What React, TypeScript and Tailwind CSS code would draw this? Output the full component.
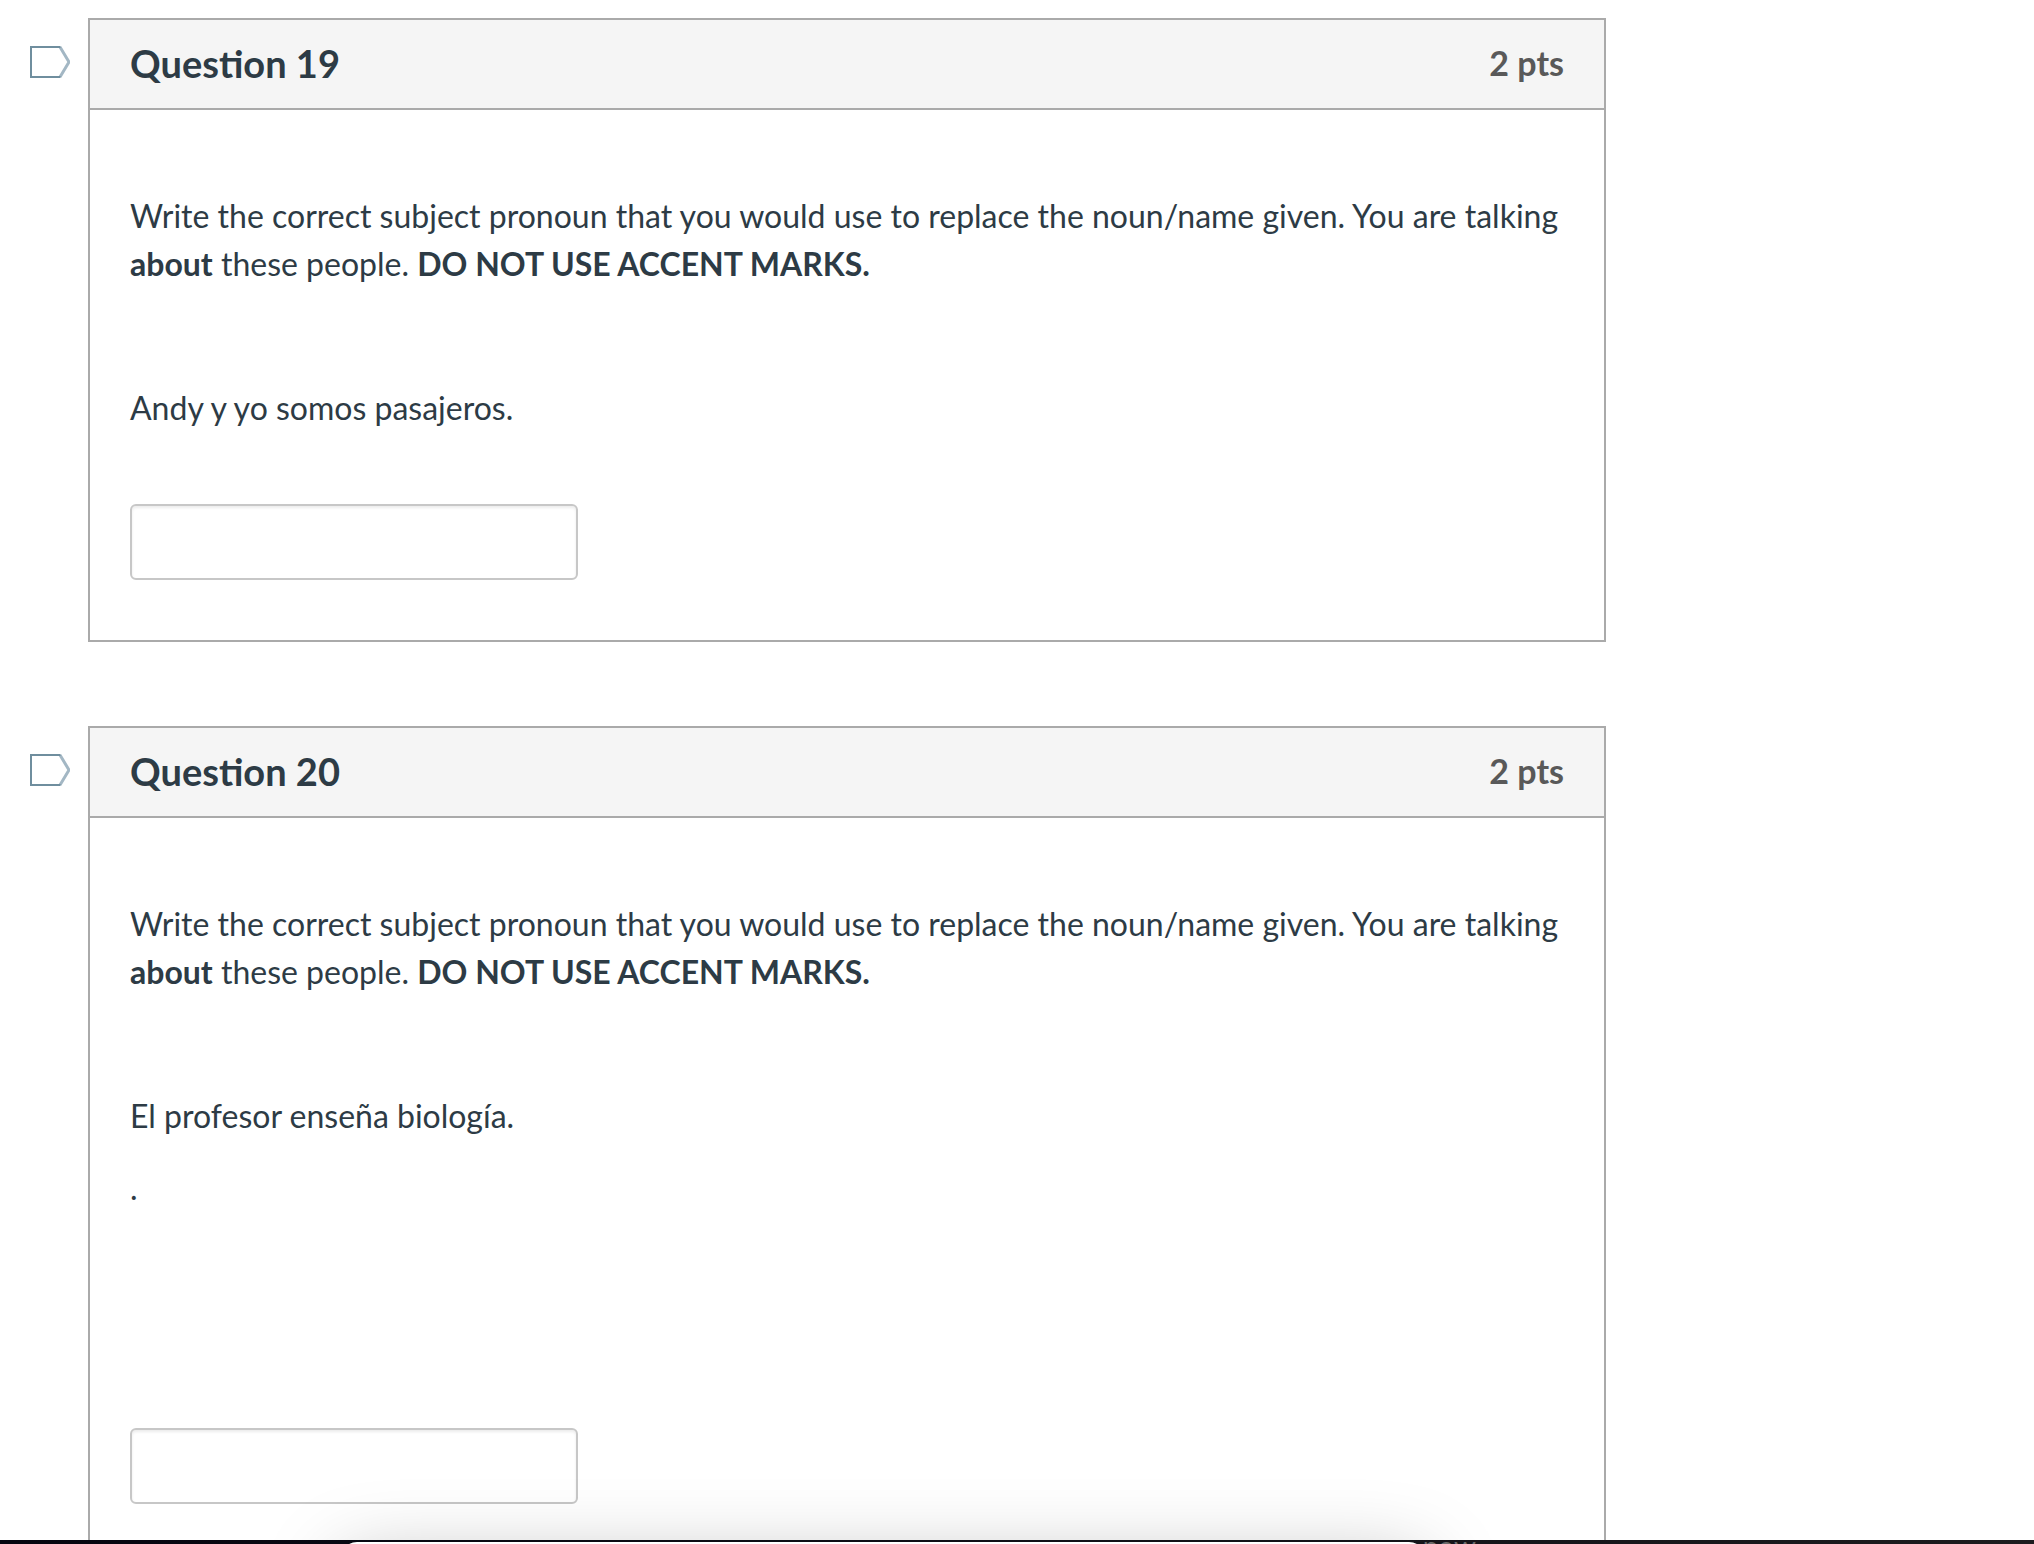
import { useState } from "react";

type Question = {
  id: number;
  points: number;
  lines: string[];
  inputGap: string;
};

const questions: Question[] = [
  {
    id: 19,
    points: 2,
    lines: ["Andy y yo somos pasajeros."],
    inputGap: "mt-[72px]",
  },
  {
    id: 20,
    points: 2,
    lines: ["El profesor enseña biología.", "."],
    inputGap: "mt-[216px]",
  },
];

function FlagButton({ id }: { id: number }) {
  const [flagged, setFlagged] = useState(false);
  return (
    <button
      type="button"
      aria-label={`Flag question ${id}`}
      aria-pressed={flagged}
      onClick={() => setFlagged(!flagged)}
      className="mt-7 ml-[30px] h-8 w-10 shrink-0"
    >
      <svg viewBox="0 0 40 32" className="h-8 w-10" fill="none">
        <path d="M30 1 L39 16 L30 31" stroke="#a3b7c4" strokeWidth="3" />
        <path
          d="M30.5 1 H1 V31 H30.5"
          stroke="#6f8e9e"
          strokeWidth="2"
          fill={flagged ? "#fcd94a" : "none"}
        />
      </svg>
    </button>
  );
}

function QuestionCard({ question }: { question: Question }) {
  const { id, points, lines, inputGap } = question;
  return (
    <section className="flex items-start">
      <FlagButton id={id} />
      <div className="ml-[18px] min-w-0 flex-1 border-2 border-[#aaaaaa]">
        <header className="flex h-[90px] items-center justify-between border-b-2 border-[#aaaaaa] bg-[#f5f5f5] px-10 pb-0.5">
          <h2 className="text-[38px] leading-[48px] font-bold">Question {id}</h2>
          <span className="text-[34px] leading-[48px] font-bold text-[#595959]">
            {points} pts
          </span>
        </header>
        <div className="px-10 pt-[82px] pb-[60px] text-[32px] leading-[48px]">
          <p>
            Write the correct subject pronoun that you would use to replace the
            noun/name given. You are talking <strong>about</strong> these
            people. <strong>DO NOT USE ACCENT MARKS.</strong>
          </p>
          <div className="mt-24 flex flex-col gap-6">
            {lines.map((line) => (
              <p key={line}>{line}</p>
            ))}
          </div>
          <input
            type="text"
            aria-label={`Answer to question ${id}`}
            className={`block h-[76px] w-[448px] max-w-full rounded-md border-2 border-[#c7c7c7] bg-white px-4 shadow-[inset_0_2px_3px_rgba(0,0,0,0.08)] outline-none ${inputGap}`}
          />
        </div>
      </div>
    </section>
  );
}

export default function App() {
  return (
    <div className="h-screen overflow-hidden bg-white font-[Lato,sans-serif] text-[#2d3b45]">
      <main className="flex flex-col gap-[84px] pt-[18px] pr-[428px]">
        {questions.map((question) => (
          <QuestionCard key={question.id} question={question} />
        ))}
      </main>

      {/* dark desktop edge with the top of another window over it */}
      <div className="pointer-events-none fixed inset-x-0 bottom-0 h-[120px] overflow-hidden">
        <div className="absolute top-[118px] right-[609px] left-[341px] h-20 rounded-2xl shadow-[0_20px_80px_rgba(0,0,0,0.27)]" />
        <div className="absolute inset-x-0 bottom-0 h-1 overflow-hidden bg-linear-to-r from-[#05050f] to-[#1c1c1e]">
          <span className="absolute -top-2 right-[558px] text-[28px] leading-7 text-[#6b6b6b]">
            now
          </span>
          <div className="absolute top-0.5 right-[609px] left-[341px] h-20 rounded-2xl bg-white" />
        </div>
      </div>
    </div>
  );
}
